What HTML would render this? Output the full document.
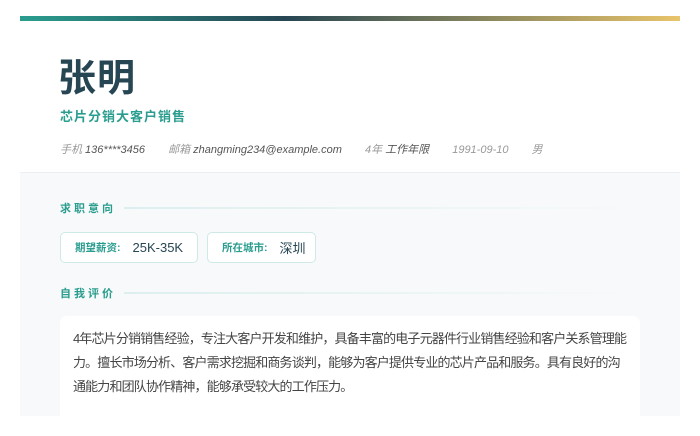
<!DOCTYPE html>
<html><head><meta charset="utf-8"><style>
*{margin:0;padding:0;box-sizing:border-box}
body{width:700px;height:400px;background:#fff;font-family:"Liberation Sans","Noto Sans CJK SC",sans-serif;overflow:hidden;position:relative}
.card{position:absolute;left:20px;top:16px;width:660px;height:400px;background:#f7f9fa}
.bar{height:5px;background:linear-gradient(90deg,#2a9d8f,#264653 40%,#e9c46a)}
.head{background:#fff;height:152px;padding-left:40px;border-bottom:1px solid #eceff1}
.name{position:absolute;left:38px;top:31px;font-size:38px;font-weight:bold;color:#264653;letter-spacing:1px}
.sub{position:absolute;left:40px;top:90px;font-size:13px;font-weight:bold;color:#2a9d8f;letter-spacing:1px}
.meta{position:absolute;left:40px;top:125px;font-size:11px;font-style:italic;color:#555;white-space:nowrap}
.meta span.l{color:#999}
.meta span.g{margin-right:20px}
.sec{position:absolute;left:40px;font-size:11px;font-weight:bold;color:#2a9d8f;letter-spacing:3px;display:flex;align-items:center}
.sec i{display:block;width:500px;height:2px;margin-left:8px;background:linear-gradient(90deg,#dcefee,rgba(220,239,238,0))}
.box{position:absolute;top:216px;height:31px;background:#fff;border:1px solid #cfe9e6;border-radius:5px;display:flex;align-items:center;padding-left:14px;font-size:13px;color:#264653}
.box b{font-size:10.5px;color:#2a9d8f;margin-right:12px}
.txt{position:absolute;left:40px;top:300px;width:580px;height:120px;background:#fff;border-radius:7px;padding:11px 0 11px 13px;font-size:13px;line-height:24px;color:#444;white-space:nowrap;letter-spacing:-0.85px}
</style></head><body>
<div class="card">
<div class="bar"></div>
<div class="head"></div>
<div class="name">张明</div>
<div class="sub">芯片分销大客户销售</div>
<div class="meta"><span class="g"><span class="l">手机</span> 136****3456</span> <span class="g"><span class="l">邮箱</span> zhangming234@example.com</span> <span class="g"><span class="l">4年</span> 工作年限</span> <span class="g l">1991-09-10</span> <span class="l">男</span></div>
<div class="sec" style="top:184px">求职意向<i></i></div>
<div class="box" style="left:40px;width:138px"><b>期望薪资:</b>25K-35K</div>
<div class="box" style="left:187px;width:109px"><b>所在城市:</b>深圳</div>
<div class="sec" style="top:269px">自我评价<i></i></div>
<div class="txt">4年芯片分销销售经验，专注大客户开发和维护，具备丰富的电子元器件行业销售经验和客户关系管理能<br>力。擅长市场分析、客户需求挖掘和商务谈判，能够为客户提供专业的芯片产品和服务。具有良好的沟<br>通能力和团队协作精神，能够承受较大的工作压力。</div>
</div>
</body></html>
